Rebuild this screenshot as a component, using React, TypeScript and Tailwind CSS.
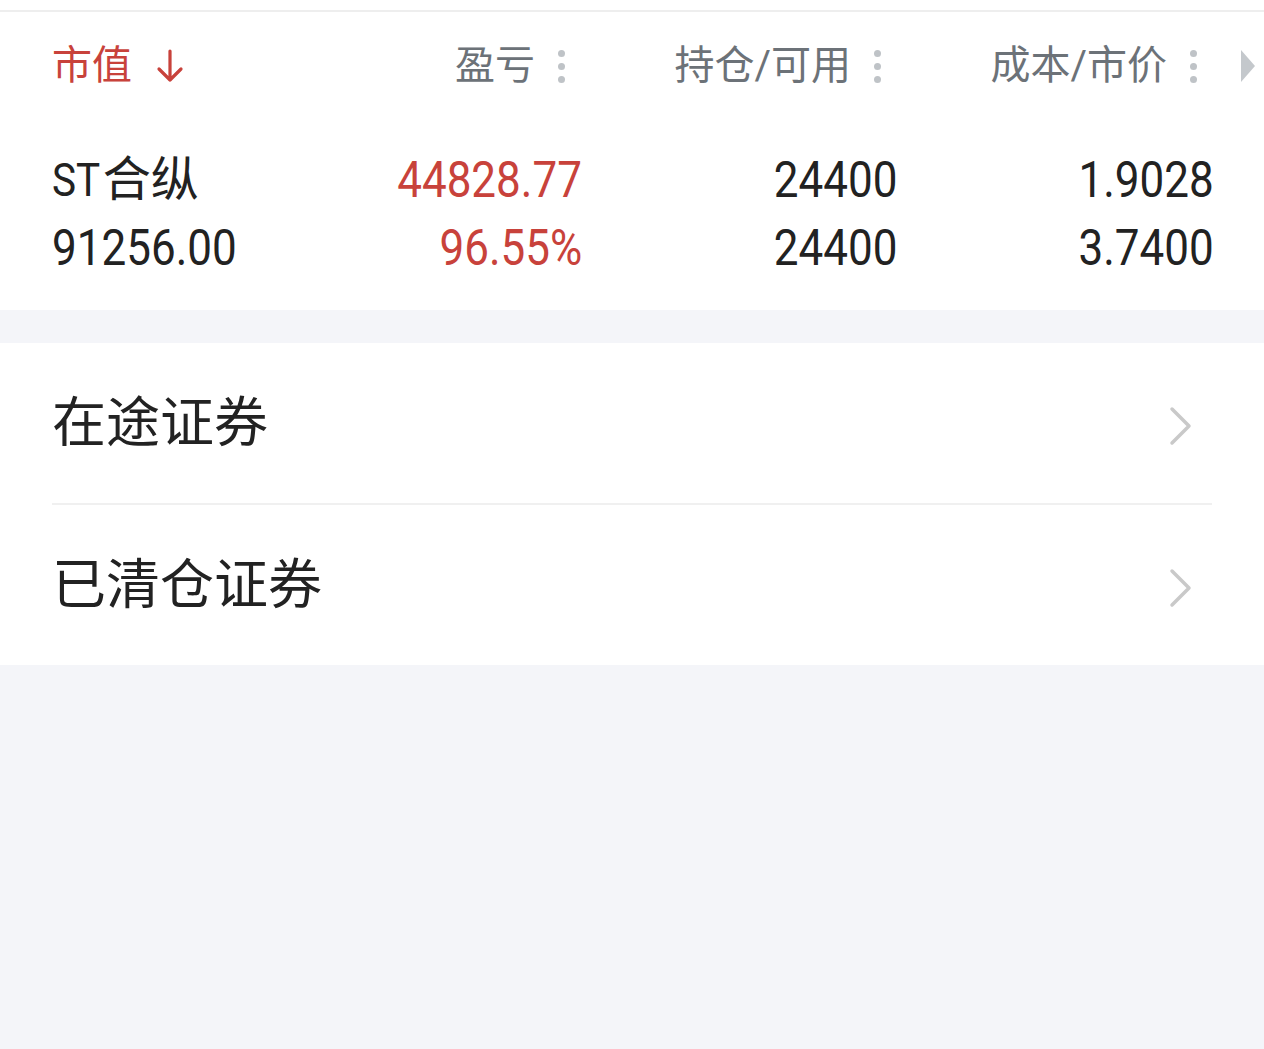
import React from "react";

const cjk = "font-['Roboto','Noto_Sans_CJK_SC',sans-serif]";

function Dots() {
  return (
    <span className="ml-[23px] flex flex-col gap-[6px]">
      <span className="size-[7px] rounded-full bg-[#bfc3c7]" />
      <span className="size-[7px] rounded-full bg-[#bfc3c7]" />
      <span className="size-[7px] rounded-full bg-[#bfc3c7]" />
    </span>
  );
}

function Chevron() {
  return (
    <svg className="mt-[6px]" width="26" height="40" viewBox="0 0 26 40" fill="none">
      <path d="M4 3 L21 20 L4 37" stroke="#c9c9c9" strokeWidth="3.5" strokeLinecap="round" strokeLinejoin="round" />
    </svg>
  );
}

// narrow digits, like the DIN face of the app
function Num({ v, left }: { v: string; left?: boolean }) {
  return (
    <span className={`inline-block scale-x-[0.88] ${left ? "origin-left" : "origin-right"}`}>{v}</span>
  );
}

const cols = "grid grid-cols-[260px_268px_316px_316px_1fr]";

export default function App() {
  return (
    <div className={`w-[1264px] h-[1049px] bg-[#f4f5f9] ${cjk}`}>
      <div className="h-[10px] bg-white" />
      <div className="h-[2px] bg-[#eeeeee]" />

      <div className="bg-white pb-[28px]">
        {/* header */}
        <div className={`${cols} h-[108px] items-center pl-[52px] text-[40px] leading-none text-[#6c7278]`}>
          <div className="flex items-center text-[#c8423b]">
            <span>市值</span>
            <svg className="ml-[24px]" width="28" height="36" viewBox="0 0 28 36" fill="none">
              <path d="M14 3 V32 M3 21 L14 32 L25 21" stroke="#c8423b" strokeWidth="3.2" strokeLinecap="round" strokeLinejoin="round" />
            </svg>
          </div>
          <div className="flex items-center justify-end pr-[15px]">
            <span>盈亏</span>
            <Dots />
          </div>
          <div className="flex items-center justify-end pr-[15px]">
            <span>持仓/可用</span>
            <Dots />
          </div>
          <div className="flex items-center justify-end pr-[15px]">
            <span>成本/市价</span>
            <Dots />
          </div>
          <div className="flex justify-end pr-[8px]">
            <svg width="16" height="34" viewBox="0 0 16 34">
              <path d="M1 1 L15 17 L1 33 Z" fill="#c4c8cc" />
            </svg>
          </div>
        </div>

        {/* data */}
        <div className="pt-[26px] pl-[52px] text-[#222222]">
          <div className={`${cols} h-[68px] items-center text-[50px] leading-none`}>
            <div className="text-[46px]">
              <Num v="ST" left />
              <span className="-ml-[4px] text-[48px]">合纵</span>
            </div>
            <div className="-mr-[2px] text-right text-[#c8423b]"><Num v="44828.77" /></div>
            <div className="-mr-[2px] text-right"><Num v="24400" /></div>
            <div className="-mr-[2px] text-right"><Num v="1.9028" /></div>
          </div>
          <div className={`${cols} h-[68px] items-center text-[50px] leading-none`}>
            <div><Num v="91256.00" left /></div>
            <div className="-mr-[2px] text-right text-[#c8423b]"><Num v="96.55%" /></div>
            <div className="-mr-[2px] text-right"><Num v="24400" /></div>
            <div className="-mr-[2px] text-right"><Num v="3.7400" /></div>
          </div>
        </div>
      </div>

      <div className="mt-[33px] bg-white pl-[52px]">
        <div className="flex h-[160px] items-center justify-between pr-[70px] text-[54px] text-[#222222]">
          <span>在途证券</span>
          <Chevron />
        </div>
        <div className="mr-[52px] h-[2px] bg-[#f0f0f0]" />
        <div className="flex h-[160px] items-center justify-between pr-[70px] text-[54px] text-[#222222]">
          <span>已清仓证券</span>
          <Chevron />
        </div>
      </div>
    </div>
  );
}
